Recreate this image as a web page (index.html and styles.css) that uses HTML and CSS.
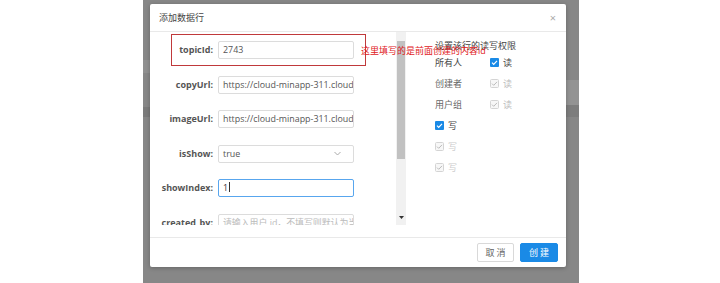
FILE: index.html
```html
<!DOCTYPE html>
<html>
<head>
<meta charset="utf-8"/>
<link rel="stylesheet" href="styles.css">
</head>
<body>
<div class="screen">
  <div class="dialog">
    <div class="dlg-head">
      <span class="dlg-title">添加数据行</span>
      <span class="dlg-close">×</span>
    </div>

    <div class="dlg-body">
      <div class="form-pane">
        <div class="form">
          <label>topicId:</label>
          <div class="inp">2743</div>

          <label>copyUrl:</label>
          <div class="inp">https://cloud-minapp-311.cloudapp.ifanrusercontent.com</div>

          <label>imageUrl:</label>
          <div class="inp">https://cloud-minapp-311.cloudapp.ifanrusercontent.com</div>

          <label>isShow:</label>
          <div class="inp select">
            <span>true</span>
            <svg width="7" height="5" viewBox="0 0 7 5"><path d="M0.5 1l3 3 3-3" stroke="#aaa" fill="none"/></svg>
          </div>

          <label>showIndex:</label>
          <div class="inp focus">1<span class="caret"></span></div>

          <label>created_by:</label>
          <div class="inp placeholder">请输入用户 id，不填写则默认为当前用户</div>
        </div>
        <div class="scrollbar">
          <div class="sb-up"></div>
          <div class="sb-thumb"></div>
          <div class="sb-track">
            <svg width="5" height="3" viewBox="0 0 5 3"><path d="M0 0h5L2.5 3z" fill="#333"/></svg>
          </div>
        </div>
      </div>

      <div class="acl">
        <div class="acl-title">设置该行的读写权限</div>
        <div class="acl-row">
          <span class="who">所有人</span>
          <svg class="cb" width="9" height="9" viewBox="0 0 9 9"><rect width="9" height="9" rx="1" fill="#1a8ae6"/><path d="M2 4.6l1.7 1.7L7 2.9" stroke="#fff" stroke-width="1.2" fill="none"/></svg>
          <span>读</span>
        </div>
        <div class="acl-row off">
          <span class="who">创建者</span>
          <svg class="cb" width="9" height="9" viewBox="0 0 9 9"><rect x="0.5" y="0.5" width="8" height="8" rx="1" fill="#f7f7f7" stroke="#d4d4d4"/><path d="M2 4.6l1.7 1.7L7 2.9" stroke="#bbb" fill="none"/></svg>
          <span>读</span>
        </div>
        <div class="acl-row off">
          <span class="who">用户组</span>
          <svg class="cb" width="9" height="9" viewBox="0 0 9 9"><rect x="0.5" y="0.5" width="8" height="8" rx="1" fill="#f7f7f7" stroke="#d4d4d4"/><path d="M2 4.6l1.7 1.7L7 2.9" stroke="#bbb" fill="none"/></svg>
          <span>读</span>
        </div>
        <div class="acl-row">
          <svg class="cb" width="9" height="9" viewBox="0 0 9 9"><rect width="9" height="9" rx="1" fill="#1a8ae6"/><path d="M2 4.6l1.7 1.7L7 2.9" stroke="#fff" stroke-width="1.2" fill="none"/></svg>
          <span>写</span>
        </div>
        <div class="acl-row off light">
          <svg class="cb" width="9" height="9" viewBox="0 0 9 9"><rect x="0.5" y="0.5" width="8" height="8" rx="1" fill="#f7f7f7" stroke="#d4d4d4"/><path d="M2 4.6l1.7 1.7L7 2.9" stroke="#bbb" fill="none"/></svg>
          <span>写</span>
        </div>
        <div class="acl-row off light">
          <svg class="cb" width="9" height="9" viewBox="0 0 9 9"><rect x="0.5" y="0.5" width="8" height="8" rx="1" fill="#f7f7f7" stroke="#d4d4d4"/><path d="M2 4.6l1.7 1.7L7 2.9" stroke="#bbb" fill="none"/></svg>
          <span>写</span>
        </div>
      </div>
    </div>

    <div class="dlg-foot">
      <button class="btn">取消</button>
      <button class="btn primary">创建</button>
    </div>

    <!-- annotation drawn over the screenshot -->
    <div class="note-box"></div>
    <div class="note">这里填写的是前面创建的内容id</div>
  </div>
</div>
</body>
</html>
```

FILE: styles.css
```css
body {
  margin: 0;
  width: 720px;
  height: 283px;
  background: #fff;
  overflow: hidden;
  font-family: "Open Sans", "Noto Sans CJK SC", sans-serif;
  font-size: 9px;
  color: #555;
}

/* dimmed page behind the modal, with a few bands of it showing at the edges */
.screen {
  margin-left: 143px;
  width: 436px;
  height: 283px;
  box-sizing: border-box;
  padding: 4px 13px 0 7px;
  background:
    linear-gradient(#7b7b7b, #7b7b7b) 0 107px / 7px 10px no-repeat,
    linear-gradient(#909090, #909090) 0 60px / 7px 13px no-repeat,
    linear-gradient(#939393, #939393) 423px 80px / 13px 25px no-repeat,
    linear-gradient(#7d7d7d, #7d7d7d) 423px 105px / 13px 12px no-repeat,
    #878787;
}

.dialog {
  position: relative;
  height: 263px;
  background: #fff;
  border-radius: 2px;
  box-shadow: 0 1px 4px rgba(0, 0, 0, 0.25);
  display: flex;
  flex-direction: column;
}

.dlg-head {
  height: 27px;
  border-bottom: 1px solid #e9e9e9;
  display: flex;
  align-items: center;
  justify-content: space-between;
  padding: 0 10px 0 9px;
}

.dlg-title {
  font-size: 9px;
  color: #444;
}

.dlg-close {
  font-size: 11px;
  color: #aaa;
}

.dlg-body {
  height: 205px;
  display: flex;
}

.form-pane {
  width: 256px;
  height: 193px;
  display: flex;
  overflow: hidden;
}

.form {
  width: 246px;
  height: 193px;
  box-sizing: border-box;
  padding-top: 9px;
  overflow: hidden;
  display: grid;
  grid-template-columns: 63px 136px;
  grid-auto-rows: 18px;
  column-gap: 5px;
  row-gap: 16.6px;
  align-content: start;
}

.form label {
  text-align: right;
  font-weight: bold;
  line-height: 18px;
  color: #555;
  white-space: nowrap;
}

.inp {
  border: 1px solid #dcdcdc;
  border-radius: 2px;
  padding: 0 4px;
  font-size: 8.9px;
  line-height: 16px;
  color: #555;
  white-space: nowrap;
  overflow: hidden;
}

.select {
  display: flex;
  align-items: center;
  justify-content: space-between;
  padding-right: 12px;
}

.focus {
  border-color: #58a6ee;
  color: #333;
}

.caret {
  display: inline-block;
  width: 1px;
  height: 10px;
  margin-left: 1px;
  vertical-align: -1px;
  background: #333;
}

.placeholder {
  color: #bbb;
}

.scrollbar {
  width: 10px;
  height: 193px;
  display: flex;
  flex-direction: column;
  background: #f1f1f1;
}

.sb-up {
  height: 9px;
}

.sb-thumb {
  height: 118px;
  margin: 0 1px;
  background: #c1c1c1;
}

.sb-track {
  flex: 1;
  display: flex;
  align-items: flex-end;
  justify-content: center;
  padding-bottom: 6px;
}

.acl {
  padding: 8px 0 0 29px;
}

.acl-title {
  height: 12px;
  line-height: 12px;
  color: #444;
}

.acl-row {
  height: 21px;
  display: flex;
  align-items: center;
  gap: 4px;
  color: #444;
}

.acl-row .who {
  width: 51px;
}

.acl-row.off .who {
  color: #666;
}

.acl-row.off span:last-child {
  color: #bbb;
}

.acl-row.light span:last-child {
  color: #ccc;
}

.cb {
  flex: none;
}

.dlg-foot {
  height: 29px;
  border-top: 1px solid #e9e9e9;
  display: flex;
  align-items: center;
  justify-content: flex-end;
  gap: 6px;
  padding-right: 8px;
}

.btn {
  height: 19px;
  width: 37px;
  padding: 0;
  border: 1px solid #d9d9d9;
  border-radius: 2px;
  background: #fff;
  color: #666;
  font-family: inherit;
  font-size: 9px;
  letter-spacing: 2px;
  text-indent: 2px;
}

.btn.primary {
  width: 38px;
  border-color: #1a8ae6;
  background: #1a8ae6;
  color: #fff;
}

.note-box {
  position: absolute;
  left: 21px;
  top: 30px;
  width: 195px;
  height: 32px;
  border: 1px solid #c0393b;
  box-sizing: border-box;
}

.note {
  position: absolute;
  left: 211px;
  top: 40px;
  font-size: 9px;
  line-height: 14px;
  color: #e0201c;
  white-space: nowrap;
}
```
